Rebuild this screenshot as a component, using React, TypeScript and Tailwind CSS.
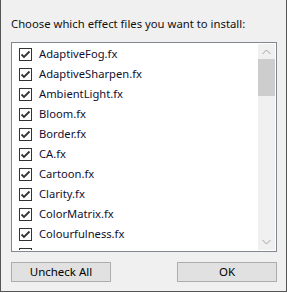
import React from "react";

const items = [
  "AdaptiveFog.fx",
  "AdaptiveSharpen.fx",
  "AmbientLight.fx",
  "Bloom.fx",
  "Border.fx",
  "CA.fx",
  "Cartoon.fx",
  "Clarity.fx",
  "ColorMatrix.fx",
  "Colourfulness.fx",
  "Curves.fx",
];

function Check() {
  return (
    <div className="w-[13px] h-[13px] shrink-0 border border-[#333333] bg-white flex items-center justify-center">
      <svg width="11" height="11" viewBox="0 0 11 11">
        <path d="M1.5 5.5 L4 8 L9.5 2.5" fill="none" stroke="#333333" strokeWidth="1.8" />
      </svg>
    </div>
  );
}

export default function App() {
  return (
    <div
      className="w-[288px] h-[293px] bg-white"
      style={{ fontFamily: '"Noto Sans", "Liberation Sans", sans-serif' }}
    >
      <div className="w-[287px] h-[292px] bg-[#f0f0f0] border-l border-r border-b border-[#555555] pl-[10px] flex flex-col">
        <div className="pt-[16px] h-[32px] text-[11.3px] leading-[16px] text-[#101010]">
          Choose which effect files you want to install:
        </div>
        <div className="mt-[10px] w-[266px] h-[210px] border border-[#828790] bg-white p-[1px] flex">
          <div className="flex-1 overflow-hidden pl-[6px] pt-[0px]">
            {items.map((t) => (
              <div key={t} className="h-[20px] flex items-center gap-[7px]">
                <Check />
                <span className="text-[11.2px] leading-[16px] text-[#101030]">{t}</span>
              </div>
            ))}
          </div>
          <div className="w-[17px] bg-[#f0f0f0] flex flex-col">
            <div className="h-[15px] flex items-center justify-center">
              <svg width="9" height="6" viewBox="0 0 9 6">
                <path d="M0.5 5 L4.5 1 L8.5 5" fill="none" stroke="#a3a3a3" strokeWidth="1" />
              </svg>
            </div>
            <div className="h-[37px] bg-[#cdcdcd]" />
            <div className="flex-1" />
            <div className="h-[17px] flex items-center justify-center">
              <svg width="9" height="6" viewBox="0 0 9 6">
                <path d="M0.5 1 L4.5 5 L8.5 1" fill="none" stroke="#a3a3a3" strokeWidth="1" />
              </svg>
            </div>
          </div>
        </div>
        <div className="mt-[10px] w-[266px] flex justify-between">
          <button className="w-[100px] h-[20px] border border-[#adadad] bg-[#e1e1e1] text-[11.5px] leading-[16px] text-black flex items-center justify-center">
            Uncheck All
          </button>
          <button className="w-[100px] h-[20px] border border-[#adadad] bg-[#e1e1e1] text-[11.5px] leading-[16px] text-black flex items-center justify-center">
            OK
          </button>
        </div>
      </div>
    </div>
  );
}
